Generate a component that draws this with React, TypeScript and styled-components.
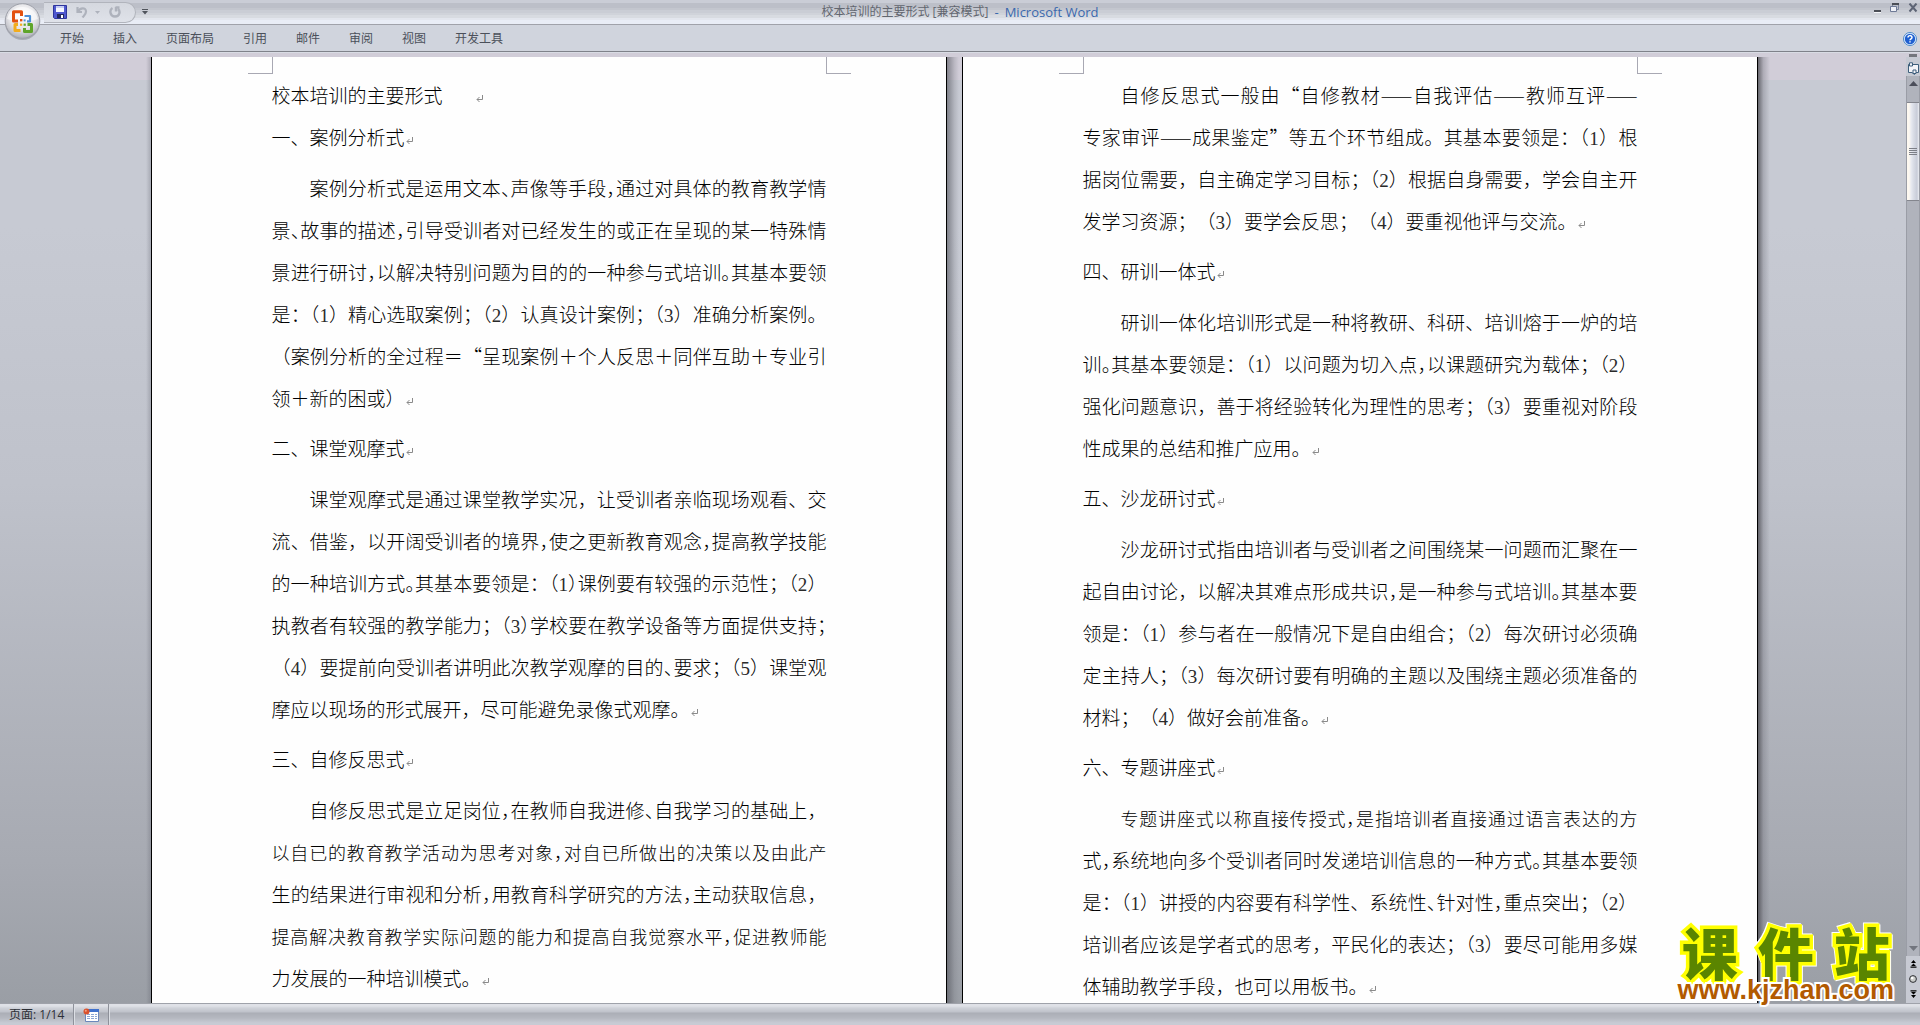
import React from "react";
import styled, { createGlobalStyle, css } from "styled-components";

const uiFont = `"Open Sans", "Noto Sans CJK SC", sans-serif`;
const bodyFont = `"Noto Sans CJK SC", sans-serif`;

const GlobalStyle = createGlobalStyle`
  * { box-sizing: border-box; }
  html, body { margin: 0; padding: 0; overflow: hidden; }
  body { font-family: ${uiFont}; font-size: 12px; background: #c7cad3; }
  button { font: inherit; color: inherit; background: none; border: 0; padding: 0; margin: 0; }
  h1, h2, p { margin: 0; font-weight: inherit; font-size: inherit; }
  svg { display: block; }
`;

const Window = styled.div`
  position: relative;
  display: flex;
  flex-direction: column;
  height: 100vh;
`;

/* ---------- title bar and ribbon ---------- */

const TitleBar = styled.header`
  display: grid;
  grid-template-columns: 1fr auto 1fr;
  align-items: center;
  height: 25px;
  padding: 0 2px;
  border-bottom: 1px solid #a0a2aa;
  background: linear-gradient(
    #cacdd6 0 3px, #bcbfc8 3px 8px, #c3c6ce 8px 10px, #cacdd5 10px 13px,
    #d0d3da 13px 15px, #d8dbe1 15px 18px, #e3e6ee 18px 20px, #e9edf6 20px
  );
`;

const QuickAccess = styled.div`
  display: flex;
  align-items: center;
  gap: 6px;
  padding-left: 42px;
`;

const Pill = styled.div`
  display: flex;
  align-items: center;
  gap: 9px;
  width: 92px;
  height: 21px;
  padding-left: 9px;
  border: 1px solid #b1b4bc;
  border-left: 0;
  border-radius: 0 11px 11px 0;
  background: linear-gradient(#d5d8df, #dfe2e9);
`;

const Steps = styled.div`
  display: flex;
  align-items: center;
  gap: 7px;
`;

const DocTitle = styled.h1`
  display: flex;
  gap: 6px;
  line-height: 24px;
  color: #62666f;
  white-space: nowrap;
`;

const AppName = styled.span`
  color: #3a68ad;
  font-size: 13px;
`;

const WindowControls = styled.div`
  display: flex;
  justify-content: flex-end;
  gap: 8px;
  padding-bottom: 8px;
`;

const Ribbon = styled.nav`
  display: flex;
  align-items: center;
  justify-content: space-between;
  height: 27px;
  padding: 2px 3px 0 60px;
  background: #d0d4dd;
  border-bottom: 1px solid #7f828a;
`;

const Tabs = styled.div`
  display: flex;
  gap: 29px;
`;

const Tab = styled.button`
  line-height: 24px;
  color: #4b505a;
  white-space: nowrap;
`;

const RibbonEdge = styled.div`
  display: flex;
  justify-content: flex-end;
  align-items: flex-end;
  height: 5px;
  padding-right: 3px;
  background: linear-gradient(#d9dce4 0 1px, #d1cdd8 1px);
`;

const SplitHandle = styled.i`
  width: 8px;
  height: 3px;
  background: #74767d;
`;

const OfficeButton = styled.button`
  position: absolute;
  left: 4px;
  top: 3px;
`;

/* ---------- document desk ---------- */

const Workspace = styled.main`
  display: flex;
  flex: 1;
  min-height: 0;
`;

const Desk = styled.div`
  display: flex;
  flex: 1;
  justify-content: center;
  min-width: 0;
  padding-left: 9px;
  overflow: hidden;
  background: linear-gradient(#d1cdd8 0 23px, #c7cad3 23px 18%, #bfc2cb 45%, #a7aab2 85%, #9a9ea5);
`;

const Shade = styled.div<{ $side: "left" | "middle" | "right" }>`
  flex: none;
  ${(p) =>
    p.$side === "left"
      ? css`width: 5px; background: linear-gradient(90deg, transparent, rgba(90, 92, 104, 0.3));`
      : p.$side === "middle"
      ? css`width: 15px; background: linear-gradient(90deg, rgba(80, 82, 90, 0.6), rgba(120, 122, 130, 0.25) 50%, transparent 80%);`
      : css`width: 12px; background: linear-gradient(90deg, rgba(70, 70, 76, 0.75), rgba(110, 110, 120, 0.35) 45%, transparent);`}
`;

const Sheet = styled.article`
  flex: none;
  width: 796px;
  background: #fefefe;
  border: 1px solid #000;
  border-width: 0 1px;
  overflow: hidden;
`;

const CropMarks = styled.div`
  display: flex;
  justify-content: space-between;
  padding: 0 95px 0 96px;
`;

const CropMark = styled.i<{ $edge: "left" | "right" }>`
  width: 25px;
  height: 17px;
  border: 0 solid #a8a8b3;
  border-bottom-width: 1px;
  ${(p) => (p.$edge === "left" ? "border-right-width: 1px;" : "border-left-width: 1px;")}
`;

const SheetText = styled.div`
  padding: 0 119px 0 120px;
  font-family: ${bodyFont};
  font-size: 19px;
  font-weight: 300;
  line-height: 42px;
  color: #000;
  text-spacing-trim: space-all;
`;

const Heading = styled.h2<{ $first?: boolean }>`
  margin: ${(p) => (p.$first ? "0 0 9px" : "8px 0 9px")};
  white-space: pre;
`;

const LeadTitle = styled.h2`
  white-space: pre;
`;

const Row = styled.span<{ $indent: boolean; $full: boolean; $dense: boolean }>`
  display: block;
  white-space: nowrap;
  font-size: ${(p) => (p.$dense ? "18px" : "19px")};
  padding-left: ${(p) => (p.$indent ? "38px" : "0")};
  text-align-last: ${(p) => (p.$full ? "justify" : "left")};
`;

const Digit = styled.span`
  font-family: "Liberation Serif", serif;
  line-height: 1;
  color: #2a2a2a;
`;

const HalfMark = styled.span`
  font-feature-settings: "halt";
`;

const Return = styled.svg`
  display: inline-block;
  margin-left: 1px;
`;

function ReturnMark() {
  return (
    <Return width="8" height="8" viewBox="0 0 8 8" fill="none" stroke="#8a8a8a" aria-hidden="true">
      <path d="M6.5 0V4.5H1M3.5 2L1 4.5L3.5 7" />
    </Return>
  );
}

/* Width of a text column, in characters. */
const COLUMN = 29.2;
const OPENING = "（“";
const NARROWABLE = "，、。；：";

/* Picks the punctuation marks to set at half width so that a line fits its column. */
function fitLine(text: string, indent: boolean) {
  const chars = [...text];
  const width = chars.reduce((w, c) => w + (/\d/.test(c) ? 0.5 : 1), indent ? 2 : 0);
  const marks = chars.map((c, i) => i).filter((i) => NARROWABLE.includes(chars[i]));
  const beforeBracket = marks.filter((i) => OPENING.includes(chars[i + 1] ?? " "));
  const others = marks.filter((i) => !beforeBracket.includes(i) && i < chars.length - 1).reverse();
  const last = marks.filter((i) => i === chars.length - 1);
  const brackets = chars.map((c, i) => i).filter((i) => chars[i] === "）");
  const candidates = [...beforeBracket, ...others, ...brackets, ...last];
  const needed = Math.max(0, Math.ceil((width - COLUMN) * 2));
  return { narrow: new Set(candidates.slice(0, needed)), dense: needed > candidates.length };
}

function TextLine({ text, indent, last }: { text: string; indent: boolean; last: boolean }) {
  const { narrow, dense } = last
    ? { narrow: new Set<number>(), dense: false }
    : fitLine(text, indent);
  const parts: React.ReactNode[] = [];
  let run = "";
  const flush = () => {
    if (run) parts.push(run);
    run = "";
  };
  [...text].forEach((c, i) => {
    if (/\d/.test(c)) {
      flush();
      parts.push(<Digit key={i}>{c}</Digit>);
    } else if (narrow.has(i)) {
      flush();
      parts.push(<HalfMark key={i}>{c}</HalfMark>);
    } else {
      run += c;
    }
  });
  flush();
  return (
    <Row $indent={indent} $full={!last} $dense={dense}>
      {parts}
      {last && <ReturnMark />}
    </Row>
  );
}

function Paragraph({ lines }: { lines: string[] }) {
  return (
    <p>
      {lines.map((t, i) => (
        <TextLine key={i} text={t} indent={i === 0} last={i === lines.length - 1} />
      ))}
    </p>
  );
}

type Section = { heading?: string; lines: string[] };

const leftPage: Section[] = [
  {
    heading: "一、案例分析式",
    lines: [
      "案例分析式是运用文本、声像等手段，通过对具体的教育教学情",
      "景、故事的描述，引导受训者对已经发生的或正在呈现的某一特殊情",
      "景进行研讨，以解决特别问题为目的的一种参与式培训。其基本要领",
      "是：（1）精心选取案例；（2）认真设计案例；（3）准确分析案例。",
      "（案例分析的全过程＝“呈现案例＋个人反思＋同伴互助＋专业引",
      "领＋新的困或）",
    ],
  },
  {
    heading: "二、课堂观摩式",
    lines: [
      "课堂观摩式是通过课堂教学实况，让受训者亲临现场观看、交",
      "流、借鉴，以开阔受训者的境界，使之更新教育观念，提高教学技能",
      "的一种培训方式。其基本要领是：（1）课例要有较强的示范性；（2）",
      "执教者有较强的教学能力；（3）学校要在教学设备等方面提供支持；",
      "（4）要提前向受训者讲明此次教学观摩的目的、要求；（5）课堂观",
      "摩应以现场的形式展开，尽可能避免录像式观摩。",
    ],
  },
  {
    heading: "三、自修反思式",
    lines: [
      "自修反思式是立足岗位，在教师自我进修、自我学习的基础上，",
      "以自已的教育教学活动为思考对象，对自已所做出的决策以及由此产",
      "生的结果进行审视和分析，用教育科学研究的方法，主动获取信息，",
      "提高解决教育教学实际问题的能力和提高自我觉察水平，促进教师能",
      "力发展的一种培训模式。",
    ],
  },
];

const rightPage: Section[] = [
  {
    lines: [
      "自修反思式一般由“自修教材——自我评估——教师互评——",
      "专家审评——成果鉴定”等五个环节组成。其基本要领是：（1）根",
      "据岗位需要，自主确定学习目标；（2）根据自身需要，学会自主开",
      "发学习资源；（3）要学会反思；（4）要重视他评与交流。",
    ],
  },
  {
    heading: "四、研训一体式",
    lines: [
      "研训一体化培训形式是一种将教研、科研、培训熔于一炉的培",
      "训。其基本要领是：（1）以问题为切入点，以课题研究为载体；（2）",
      "强化问题意识，善于将经验转化为理性的思考；（3）要重视对阶段",
      "性成果的总结和推广应用。",
    ],
  },
  {
    heading: "五、沙龙研讨式",
    lines: [
      "沙龙研讨式指由培训者与受训者之间围绕某一问题而汇聚在一",
      "起自由讨论，以解决其难点形成共识，是一种参与式培训。其基本要",
      "领是：（1）参与者在一般情况下是自由组合；（2）每次研讨必须确",
      "定主持人；（3）每次研讨要有明确的主题以及围绕主题必须准备的",
      "材料；（4）做好会前准备。",
    ],
  },
  {
    heading: "六、专题讲座式",
    lines: [
      "专题讲座式以称直接传授式，是指培训者直接通过语言表达的方",
      "式，系统地向多个受训者同时发递培训信息的一种方式。其基本要领",
      "是：（1）讲授的内容要有科学性、系统性、针对性，重点突出；（2）",
      "培训者应该是学者式的思考，平民化的表达；（3）要尽可能用多媒",
      "体辅助教学手段，也可以用板书。",
    ],
  },
];

function Page({ title, sections }: { title?: string; sections: Section[] }) {
  return (
    <Sheet>
      <CropMarks>
        <CropMark $edge="left" />
        <CropMark $edge="right" />
      </CropMarks>
      <SheetText>
        {title && (
          <LeadTitle>
            {title}
            {"\u3000\u2002 "}
            <ReturnMark />
          </LeadTitle>
        )}
        {sections.map((s, i) => (
          <section key={i}>
            {s.heading && (
              <Heading $first={i === 0}>
                {s.heading}
                <ReturnMark />
              </Heading>
            )}
            <Paragraph lines={s.lines} />
          </section>
        ))}
      </SheetText>
    </Sheet>
  );
}

/* ---------- scroll bar ---------- */

const ScrollColumn = styled.aside`
  display: flex;
  flex-direction: column;
  flex: none;
  width: 14px;
  background: #c7cad3;
`;

const RulerToggle = styled.button`
  height: 19px;
  padding: 4px 0 0 1px;
`;

const Track = styled.div`
  display: flex;
  flex: 1;
  flex-direction: column;
  align-items: stretch;
  border: 1px solid #9a9da6;
  border-width: 0 1px;
  background: #b0b3bc;
`;

const ArrowButton = styled.button<{ $down?: boolean }>`
  display: flex;
  justify-content: center;
  padding: ${(p) => (p.$down ? "0 0 5px" : "5px 0 16px")};
  margin-top: ${(p) => (p.$down ? "auto" : "0")};
`;

const Thumb = styled.div`
  display: flex;
  flex-direction: column;
  align-items: center;
  justify-content: center;
  gap: 1px;
  height: 99px;
  border: 1px solid #84868e;
  border-width: 1px 0;
  background: linear-gradient(90deg, #fdf8f0 0 2px, #e9ebf1 4px, #dcdfe8 6px, #c8ccd8 10px, #eceef3);
`;

const Grip = styled.i`
  width: 8px;
  height: 1px;
  background: #7c7f87;
`;

const BrowseButtons = styled.div`
  display: flex;
  flex-direction: column;
  align-items: center;
  gap: 7px;
  padding: 4px 0 5px;
`;

/* ---------- status bar ---------- */

const StatusBar = styled.footer`
  display: flex;
  flex: none;
  height: 22px;
  border-top: 1px solid #9fa2aa;
  background: linear-gradient(#dfe1e7 0 2px, #cfd2d9 4px, #bfc2ca 8px, #abaeb6 9px, #b5b8c0 14px, #c8cbd4 19px);
`;

const StatusCell = styled.div`
  display: flex;
  align-items: center;
  padding: 0 9px;
  border-right: 1px solid #8e919a;
  box-shadow: 1px 0 #dcdfe5;
  color: #2c2f36;
  white-space: nowrap;
  line-height: 21px;
`;

/* ---------- site stamp ---------- */

const Stamp = styled.div`
  position: absolute;
  right: 26px;
  bottom: 23px;
  display: flex;
  flex-direction: column;
  align-items: center;
`;

const StampName = styled.div`
  display: flex;
  gap: 20px;
  font-family: "Noto Sans CJK SC", sans-serif;
  font-size: 56px;
  font-weight: 900;
  line-height: 54px;
  color: #5a8500;
  -webkit-text-stroke: 7px #ffff00;
  paint-order: stroke fill;
  filter: drop-shadow(1px 1px 0 #fff) drop-shadow(-1px -1px 0 #fff);
`;

const StampUrl = styled.a`
  position: relative;
  font-family: "Liberation Sans", sans-serif;
  font-size: 27px;
  font-weight: 700;
  line-height: 24px;
  color: #b25a00;
  text-decoration: none;
  -webkit-text-stroke: 4px #fff;
  paint-order: stroke fill;
`;

/* ---------- icons ---------- */

const OfficeLogo = () => (
  <svg width="37" height="38" viewBox="0 0 37 38">
    <defs>
      <radialGradient id="orb" cx="50%" cy="35%" r="65%">
        <stop offset="0" stopColor="#ffffff" />
        <stop offset="0.6" stopColor="#e4e4e8" />
        <stop offset="1" stopColor="#aeb0b8" />
      </radialGradient>
    </defs>
    <circle cx="18.5" cy="19.5" r="17.5" fill="#8d9099" opacity="0.6" />
    <circle cx="18.5" cy="18" r="17.3" fill="url(#orb)" stroke="#9da0a9" />
    <path d="M3 16A16 16 0 0 1 34 16Q18 22 3 16Z" fill="#fff" opacity="0.6" />
    <g fill="none" strokeWidth="3" strokeLinejoin="round">
      <path d="M14 18H9.5V8.8H17.5V13" stroke="#e2500f" />
      <path d="M20.5 13H26V18.3H23" stroke="#4c8fd6" strokeWidth="2.2" />
      <path d="M16.5 27.5H11V21.5H14" stroke="#f2ac1d" />
      <path d="M23.5 21.5H27.5V28.5H20.5V25" stroke="#5fa52a" />
    </g>
    <path d="M16 16h2.4v2.4h-2.4z" fill="#e2500f" />
    <path d="M19.6 16.4h2v2h-2z" fill="#4c8fd6" />
    <path d="M16 20.6h2.2v2.2h-2.2z" fill="#f2ac1d" />
    <path d="M19.6 20.6h2.2v2.2h-2.2z" fill="#5fa52a" />
  </svg>
);

const SaveIcon = () => (
  <svg width="14" height="14" viewBox="0 0 14 14">
    <path d="M0.5 0.5H13.5V13.5H1.5L0.5 12.5Z" fill="#4f58cf" stroke="#2f369c" />
    <path d="M3 1H11V7H3Z" fill="#f4f6ff" />
    <path d="M3 1H11V3H3Z" fill="#c5cdf5" />
    <path d="M4 9H11V13H4Z" fill="#23285f" />
    <path d="M8 10H10V13H8Z" fill="#fff" />
  </svg>
);

const UndoIcon = () => (
  <svg width="12" height="12" viewBox="0 0 12 12" fill="none" stroke="#aeb2bc" strokeWidth="2.2">
    <path d="M1.5 1V6H6M2 5.5C4 1.5 10 1 10 5.5C10 8.5 8 9.5 6.5 11.5" />
  </svg>
);

const RedoIcon = () => (
  <svg width="12" height="12" viewBox="0 0 12 12" fill="none" stroke="#aeb2bc" strokeWidth="2.4">
    <path d="M3.5 2C0 4 1 10.5 6 10.5C11 10.5 11.5 5 9 3M6.5 1.5H10.5M7 1V5.5" />
  </svg>
);

const Caret = ({ color }: { color: string }) => (
  <svg width="5" height="3" viewBox="0 0 5 3">
    <path d="M0 0H5L2.5 3Z" fill={color} />
  </svg>
);

const CustomizeIcon = () => (
  <svg width="6" height="6" viewBox="0 0 6 6">
    <path d="M0 0H6V1H0ZM0 2H6L3 5.5Z" fill="#50545c" />
  </svg>
);

const MinimizeIcon = () => (
  <svg width="10" height="10" viewBox="0 0 10 10">
    <path d="M2 7H9V9H2Z" fill="#4b4e56" />
    <path d="M2 9H9V10H2Z" fill="#f5f6f9" />
  </svg>
);

const RestoreIcon = () => (
  <svg width="10" height="10" viewBox="0 0 10 10" fill="none">
    <path d="M2.5 4V1.5H8.5V6.5H7" stroke="#7a849c" />
    <path d="M2 1H9" stroke="#4b4e56" strokeWidth="2" />
    <path d="M0.5 3.5H6.5V8.5H0.5Z" fill="#eef0f6" stroke="#6e7a96" />
  </svg>
);

const CloseIcon = () => (
  <svg width="10" height="10" viewBox="0 0 10 10" fill="none" stroke="#5d6475" strokeWidth="2">
    <path d="M1.5 0.5L8.5 8.5M8.5 0.5L1.5 8.5" />
  </svg>
);

const HelpIcon = () => (
  <svg width="14" height="14" viewBox="0 0 14 14">
    <circle cx="7" cy="7" r="6.5" fill="#e9f4ff" stroke="#4a86c8" />
    <circle cx="7" cy="7" r="5.2" fill="#1f5fd0" />
    <path d="M5 5.6C5 3 9 3 9 5.4C9 6.8 7 6.8 7 8.3M7 9.3V10.6" stroke="#fff" strokeWidth="1.5" fill="none" />
  </svg>
);

const RulerIcon = () => (
  <svg width="13" height="14" viewBox="0 0 13 14">
    <path d="M1.5 2.5H11.5V10.5H9L7.5 12.5L5 10.5H1.5Z" fill="#f4f4f8" stroke="#3f5f7c" />
    <path d="M2.5 0.8H5.5V4H2.5ZM6 8H9V11.5H6Z" fill="#f4f4f8" stroke="#3f5f7c" />
  </svg>
);

const ScrollArrow = ({ down }: { down?: boolean }) => (
  <svg width="9" height="5" viewBox="0 0 9 5">
    <path d={down ? "M0 0H9L4.5 5Z" : "M0 5H9L4.5 0Z"} fill={down ? "#72757e" : "#4b4e5a"} />
  </svg>
);

const BrowseArrow = ({ down }: { down?: boolean }) => (
  <svg width="7" height="8" viewBox="0 0 7 8">
    <g transform={down ? "rotate(180 3.5 4)" : undefined} fill="#000">
      <path d="M3.5 0L6 3H1ZM3.5 3.4L6 6H1ZM0.5 6.5H6.5V7.7H0.5Z" />
    </g>
  </svg>
);

const BrowseBall = () => (
  <svg width="8" height="8" viewBox="0 0 8 8">
    <circle cx="4" cy="4" r="3.4" fill="#c9cbc9" stroke="#2c2e33" />
    <circle cx="3.2" cy="3" r="1.3" fill="#fff" />
  </svg>
);

const MacroIcon = () => (
  <svg width="16" height="14" viewBox="0 0 16 14">
    <path d="M2.5 1.5H15.5V13.5H2.5Z" fill="#fff" stroke="#6b87bb" />
    <path d="M3 1H16V4H3Z" fill="#3e70cc" />
    <path d="M4 6.5H14M4 8.5H14M4 10.5H14" stroke="#8ba6d4" strokeDasharray="3 1" />
    <circle cx="3.5" cy="3.5" r="3" fill="#d9512c" />
    <circle cx="2.8" cy="2.8" r="1" fill="#f2a183" />
  </svg>
);

const tabs = ["开始", "插入", "页面布局", "引用", "邮件", "审阅", "视图", "开发工具"];

export default function App() {
  return (
    <Window>
      <GlobalStyle />
      <TitleBar>
        <QuickAccess>
          <Pill>
            <button aria-label="保存"><SaveIcon /></button>
            <Steps>
              <button aria-label="撤消"><UndoIcon /></button>
              <Caret color="#aeb2bc" />
            </Steps>
            <button aria-label="重复"><RedoIcon /></button>
          </Pill>
          <button aria-label="自定义快速访问工具栏"><CustomizeIcon /></button>
        </QuickAccess>
        <DocTitle>
          <span>校本培训的主要形式 [兼容模式]</span>
          <AppName>-</AppName>
          <AppName>Microsoft Word</AppName>
        </DocTitle>
        <WindowControls>
          <button aria-label="最小化"><MinimizeIcon /></button>
          <button aria-label="还原"><RestoreIcon /></button>
          <button aria-label="关闭"><CloseIcon /></button>
        </WindowControls>
      </TitleBar>
      <Ribbon>
        <Tabs>
          {tabs.map((t) => (
            <Tab key={t}>{t}</Tab>
          ))}
        </Tabs>
        <button aria-label="帮助"><HelpIcon /></button>
      </Ribbon>
      <RibbonEdge>
        <SplitHandle />
      </RibbonEdge>
      <OfficeButton aria-label="Office 按钮"><OfficeLogo /></OfficeButton>

      <Workspace>
        <Desk>
          <Shade $side="left" />
          <Page title="校本培训的主要形式" sections={leftPage} />
          <Shade $side="middle" />
          <Page sections={rightPage} />
          <Shade $side="right" />
        </Desk>
        <ScrollColumn>
          <RulerToggle aria-label="标尺"><RulerIcon /></RulerToggle>
          <Track>
            <ArrowButton aria-label="向上滚动"><ScrollArrow /></ArrowButton>
            <Thumb>
              <Grip /><Grip /><Grip /><Grip />
            </Thumb>
            <ArrowButton $down aria-label="向下滚动"><ScrollArrow down /></ArrowButton>
          </Track>
          <BrowseButtons>
            <button aria-label="前一页"><BrowseArrow /></button>
            <button aria-label="选择浏览对象"><BrowseBall /></button>
            <button aria-label="下一页"><BrowseArrow down /></button>
          </BrowseButtons>
        </ScrollColumn>
      </Workspace>

      <StatusBar>
        <StatusCell>页面: 1/14</StatusCell>
        <StatusCell>
          <button aria-label="录制宏"><MacroIcon /></button>
        </StatusCell>
      </StatusBar>

      <Stamp>
        <StampName>
          <span>课</span>
          <span>件</span>
          <span>站</span>
        </StampName>
        <StampUrl href="#">www.kjzhan.com</StampUrl>
      </Stamp>
    </Window>
  );
}
